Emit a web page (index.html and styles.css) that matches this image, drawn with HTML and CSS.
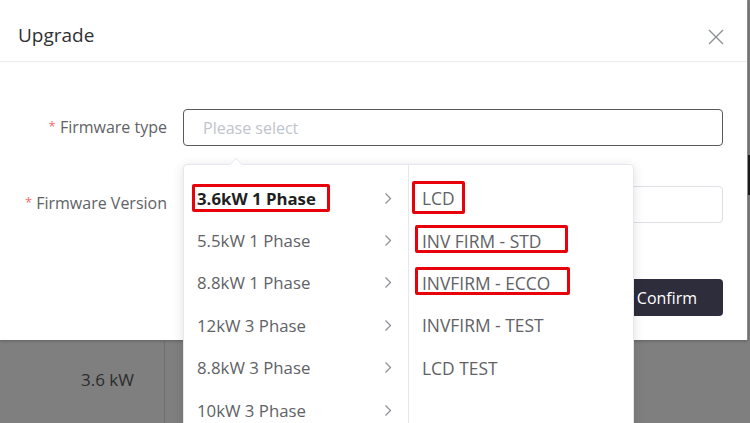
FILE: index.html
```
<!DOCTYPE html>
<html>
<head>
<meta charset="utf-8">
<link rel="stylesheet" href="styles.css">
</head>
<body>
<div class="under">
  <div class="under-row">
    <div class="under-cell">3.6 kW</div>
    <div class="under-cell2"></div>
  </div>
</div>

<div class="modal">
  <div class="modal-head">
    <span class="modal-title">Upgrade</span>
    <svg class="close" width="16" height="16" viewBox="0 0 16 16"><path d="M1 1 L15 15 M15 1 L1 15" stroke="#8c8f96" stroke-width="1.4" fill="none"/></svg>
  </div>
  <div class="modal-body">
    <div class="form-row row1">
      <label class="label"><span class="req">*</span> Firmware type</label>
      <div class="input focus"><span class="ph">Please select</span></div>
    </div>
    <div class="form-row row2">
      <label class="label"><span class="req">*</span> Firmware Version</label>
      <div class="input"></div>
    </div>
    <div class="footer">
      <button class="btn">Confirm</button>
    </div>
  </div>
</div>

<div class="dropdown">
  <div class="arrow"></div>
  <div class="col col-left">
    <div class="item active"><span>3.6kW 1 Phase</span><i class="mark mark-a"></i><svg class="chev" width="8" height="13" viewBox="0 0 8 13"><path d="M1.5 1.5 L6.5 6.5 L1.5 11.5" stroke="#8f9299" stroke-width="1.3" fill="none"/></svg></div>
    <div class="item"><span>5.5kW 1 Phase</span><svg class="chev" width="8" height="13" viewBox="0 0 8 13"><path d="M1.5 1.5 L6.5 6.5 L1.5 11.5" stroke="#8f9299" stroke-width="1.3" fill="none"/></svg></div>
    <div class="item"><span>8.8kW 1 Phase</span><svg class="chev" width="8" height="13" viewBox="0 0 8 13"><path d="M1.5 1.5 L6.5 6.5 L1.5 11.5" stroke="#8f9299" stroke-width="1.3" fill="none"/></svg></div>
    <div class="item"><span>12kW 3 Phase</span><svg class="chev" width="8" height="13" viewBox="0 0 8 13"><path d="M1.5 1.5 L6.5 6.5 L1.5 11.5" stroke="#8f9299" stroke-width="1.3" fill="none"/></svg></div>
    <div class="item"><span>8.8kW 3 Phase</span><svg class="chev" width="8" height="13" viewBox="0 0 8 13"><path d="M1.5 1.5 L6.5 6.5 L1.5 11.5" stroke="#8f9299" stroke-width="1.3" fill="none"/></svg></div>
    <div class="item"><span>10kW 3 Phase</span><svg class="chev" width="8" height="13" viewBox="0 0 8 13"><path d="M1.5 1.5 L6.5 6.5 L1.5 11.5" stroke="#8f9299" stroke-width="1.3" fill="none"/></svg></div>
  </div>
  <div class="col col-right">
    <div class="item"><span>LCD</span><i class="mark mark-b"></i></div>
    <div class="item"><span>INV FIRM - STD</span><i class="mark mark-c"></i></div>
    <div class="item"><span>INVFIRM - ECCO</span><i class="mark mark-d"></i></div>
    <div class="item"><span>INVFIRM - TEST</span></div>
    <div class="item"><span>LCD TEST</span></div>
  </div>
</div>
<div class="edge"></div>
</body>
</html>
```

FILE: styles.css
```
html, body {
  margin: 0;
  padding: 0;
}
body {
  width: 750px;
  height: 423px;
  overflow: hidden;
  background: #7f7f7f;
  font-family: "Open Sans", "Noto Sans", sans-serif;
  position: relative;
}
.under {
  padding-top: 341px;
}
.under-row {
  display: flex;
  height: 82px;
}
.under-cell {
  width: 165px;
  box-sizing: border-box;
  border-right: 1px solid #6f6f6f;
  text-align: right;
  padding-right: 30px;
  line-height: 78px;
  font-size: 17px;
  color: #2c2c2c;
}
.modal {
  position: absolute;
  left: 0;
  top: 0;
  width: 747px;
  height: 340px;
  background: #fff;
  border-right: 1px solid #8a8a8a;
  box-shadow: 0 1px 3px rgba(0,0,0,0.25);
}
.edge {
  position: absolute;
  left: 748px;
  top: 155px;
  width: 2px;
  height: 40px;
  background: #1a1a1a;
}
.modal-head {
  height: 62px;
  border-bottom: 1px solid #ececec;
  box-sizing: border-box;
  display: flex;
  align-items: center;
  justify-content: space-between;
  padding: 0 23px 0 18px;
}
.modal-title {
  font-size: 19px;
  color: #303133;
  margin-top: 8px;
}
.close {
  margin-top: 13px;
}
.modal-body {
  padding: 47px 24px 0 0;
}
.form-row {
  display: flex;
  align-items: center;
}
.row2 {
  margin-top: 40px;
}
.label {
  width: 167px;
  text-align: right;
  padding-right: 16px;
  font-size: 16px;
  color: #606266;
  flex: none;
}
.row1 .label {
  margin-top: -2px;
}
.row2 .label {
  margin-top: -3px;
}
.req {
  color: #f56c6c;
  font-size: 13px;
  position: relative;
  top: -2px;
}
.input {
  flex: 1;
  height: 35px;
  border: 1px solid #dcdfe6;
  border-radius: 4px;
  display: flex;
  align-items: center;
  padding-left: 19px;
}
.input.focus {
  border-color: #5a5a5a;
  height: 35px;
}
.ph {
  color: #c0c4cc;
  font-size: 16px;
}
.footer {
  display: flex;
  justify-content: flex-end;
  margin-top: 56px;
}
.btn {
  width: 112px;
  height: 37px;
  background: #2e2d3b;
  color: #fff;
  border: none;
  border-radius: 4px;
  font-family: inherit;
  font-size: 16px;
  padding: 0;
}
.dropdown {
  position: absolute;
  left: 183px;
  top: 164px;
  width: 451px;
  height: 270px;
  background: #fff;
  border: 1px solid #e4e7ed;
  border-radius: 4px;
  box-sizing: border-box;
  box-shadow: 0 2px 12px rgba(0,0,0,0.12);
  display: flex;
}
.arrow {
  position: absolute;
  left: 46px;
  top: -7px;
  width: 0;
  height: 0;
  border-left: 6px solid transparent;
  border-right: 6px solid transparent;
  border-bottom: 6px solid #e4e7ed;
}
.arrow::after {
  content: "";
  position: absolute;
  left: -6px;
  top: 1px;
  border-left: 6px solid transparent;
  border-right: 6px solid transparent;
  border-bottom: 6px solid #fff;
}
.col {
  padding-top: 12px;
}
.col-left {
  width: 224px;
  border-right: 1px solid #e4e7ed;
}
.col-right {
  flex: 1;
}
.item {
  position: relative;
  height: 42.4px;
  display: flex;
  align-items: center;
  justify-content: space-between;
  padding: 0 16px 0 13px;
  font-size: 16.8px;
  color: #606266;
}
.col-right .item {
  font-size: 17.4px;
}
.item.active {
  font-weight: 700;
  color: #1f1f1f;
}
.chev {
  flex: none;
}
.mark {
  position: absolute;
  border: 3px solid #e8000b;
  border-radius: 2px;
}
.mark-a {
  left: 8px;
  width: 132px;
  top: 7px;
  height: 22px;
}
.mark-b {
  left: 3px;
  width: 47px;
  top: 4px;
  height: 27px;
}
.mark-c {
  left: 6px;
  width: 147px;
  top: 6px;
  height: 22px;
}
.mark-d {
  left: 6px;
  width: 149px;
  top: 5px;
  height: 22px;
}
```
